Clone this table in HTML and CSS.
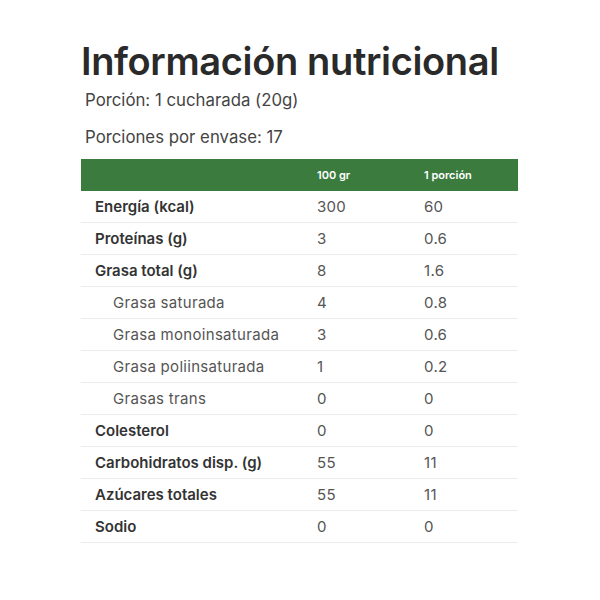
FILE: index.html
```html
<!DOCTYPE html>
<html lang="es">
<head>
<meta charset="utf-8">
<link rel="stylesheet" href="styles.css">
</head>
<body>
<div class="wrap">
  <h1 class="title">Información nutricional</h1>
  <p class="meta first">Porción: 1 cucharada (20g)</p>
  <p class="meta">Porciones por envase: 17</p>
  <div class="table">
    <div class="row head"><span></span><span>100 gr</span><span>1 porción</span></div>
    <div class="row"><span class="lbl">Energía (kcal)</span><span>300</span><span>60</span></div>
    <div class="row"><span class="lbl">Proteínas (g)</span><span>3</span><span>0.6</span></div>
    <div class="row"><span class="lbl">Grasa total (g)</span><span>8</span><span>1.6</span></div>
    <div class="row"><span class="sub">Grasa saturada</span><span>4</span><span>0.8</span></div>
    <div class="row"><span class="sub">Grasa monoinsaturada</span><span>3</span><span>0.6</span></div>
    <div class="row"><span class="sub">Grasa poliinsaturada</span><span>1</span><span>0.2</span></div>
    <div class="row"><span class="sub">Grasas trans</span><span>0</span><span>0</span></div>
    <div class="row"><span class="lbl">Colesterol</span><span>0</span><span>0</span></div>
    <div class="row"><span class="lbl">Carbohidratos disp. (g)</span><span>55</span><span>11</span></div>
    <div class="row"><span class="lbl">Azúcares totales</span><span>55</span><span>11</span></div>
    <div class="row"><span class="lbl">Sodio</span><span>0</span><span>0</span></div>
  </div>
</div>
</body>
</html>
```
FILE: styles.css
```css
* { box-sizing: border-box; }
html, body { margin: 0; padding: 0; background: #fff; }
body { font-family: Inter, "Noto Sans", sans-serif; color: #2b2b2b; }
.wrap { width: 437px; margin-left: 81px; padding-top: 38px; }
.title { margin: 0; font-size: 38px; font-weight: 600; letter-spacing: -0.35px; line-height: 46px; color: #2a2a2a; }
.meta { margin: 0; padding-left: 4px; font-size: 16.8px; color: #444; line-height: 20px; letter-spacing: 0; }
.meta.first { margin-top: 6px; }
.meta + .meta { margin-top: 17px; }
.table { margin-top: 12px; }
.row { display: grid; grid-template-columns: 224px 107px 1fr; height: 32px; align-items: center; border-bottom: 1px solid #ececec; font-size: 15px; color: #555; letter-spacing: 0.3px; }
.row span { padding-left: 12px; }
.row span:first-child { padding-left: 14px; }
.row.head { background: #3b7c3e; border-bottom: none; color: #fff; font-size: 11px; font-weight: 600; letter-spacing: 0; }
.lbl { font-weight: 600; color: #333; letter-spacing: 0; }
.row span.sub { padding-left: 32px; color: #555; }
```
